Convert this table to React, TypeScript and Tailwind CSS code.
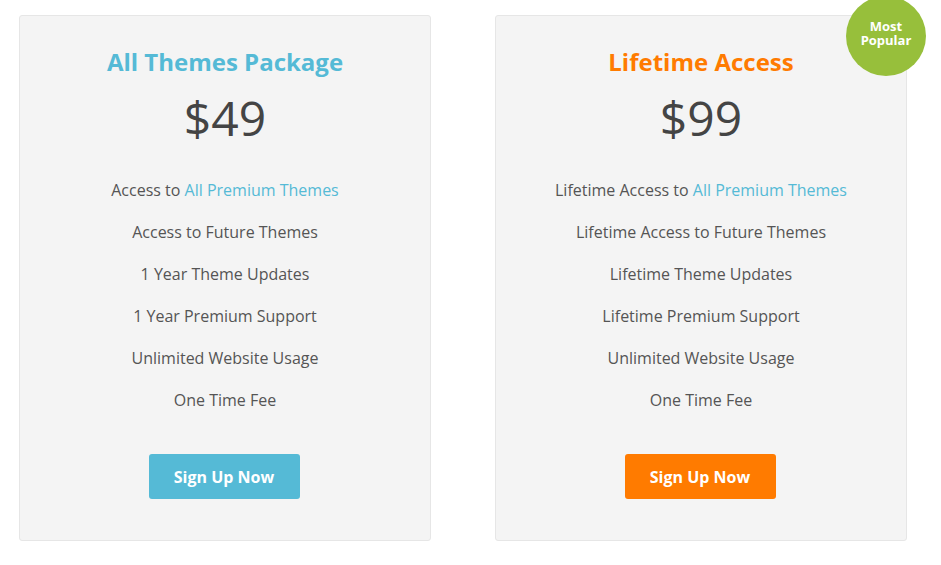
const plans = [
  {
    title: 'All Themes Package',
    price: '$49',
    accent: 'text-[#55bad6]',
    button: 'bg-[#55bad6]',
    features: [
      'Access to Future Themes',
      '1 Year Theme Updates',
      '1 Year Premium Support',
      'Unlimited Website Usage',
      'One Time Fee',
    ],
    lead: 'Access to ',
    popular: false,
  },
  {
    title: 'Lifetime Access',
    price: '$99',
    accent: 'text-[#ff7b00]',
    button: 'bg-[#ff7b00]',
    features: [
      'Lifetime Access to Future Themes',
      'Lifetime Theme Updates',
      'Lifetime Premium Support',
      'Unlimited Website Usage',
      'One Time Fee',
    ],
    lead: 'Lifetime Access to ',
    popular: true,
  },
]

export default function App() {
  return (
    <div className="w-[941px] h-[565px] bg-white font-['Open_Sans',sans-serif] overflow-hidden">
      <div className="flex gap-[64px] pl-[19px] pt-[15px]">
        {plans.map((plan) => (
          <div
            key={plan.title}
            className="relative w-[412px] h-[526px] bg-[#f4f4f4] border border-[#e6e6e6] rounded-[3px] flex flex-col items-center pt-[29px]"
          >
            {plan.popular && (
              <div className="absolute -top-[20px] -right-[20px] w-[80px] h-[80px] rounded-full bg-[#97bf3b] flex flex-col items-center justify-center pb-[6px] text-center text-white font-bold text-[13px] leading-[14px]">
                <span className="block">Most</span>
                <span className="block">Popular</span>
              </div>
            )}
            <h2 className={`text-[24px] leading-[34px] font-bold ${plan.accent}`}>{plan.title}</h2>
            <div className="mt-[11px] text-[48px] leading-[56px] text-[#444]">{plan.price}</div>
            <ul className="mt-[32px] flex flex-col gap-[18px] text-[16px] leading-[24px] text-[#555] text-center">
              <li>
                {plan.lead}
                <span className="text-[#55bad6]">All Premium Themes</span>
              </li>
              {plan.features.map((f) => (
                <li key={f}>{f}</li>
              ))}
            </ul>
            <button
              className={`mt-[42px] w-[151px] h-[45px] -translate-x-[1px] rounded-[3px] text-white font-bold text-[16px] ${plan.button}`}
            >
              Sign Up Now
            </button>
          </div>
        ))}
      </div>
    </div>
  )
}
